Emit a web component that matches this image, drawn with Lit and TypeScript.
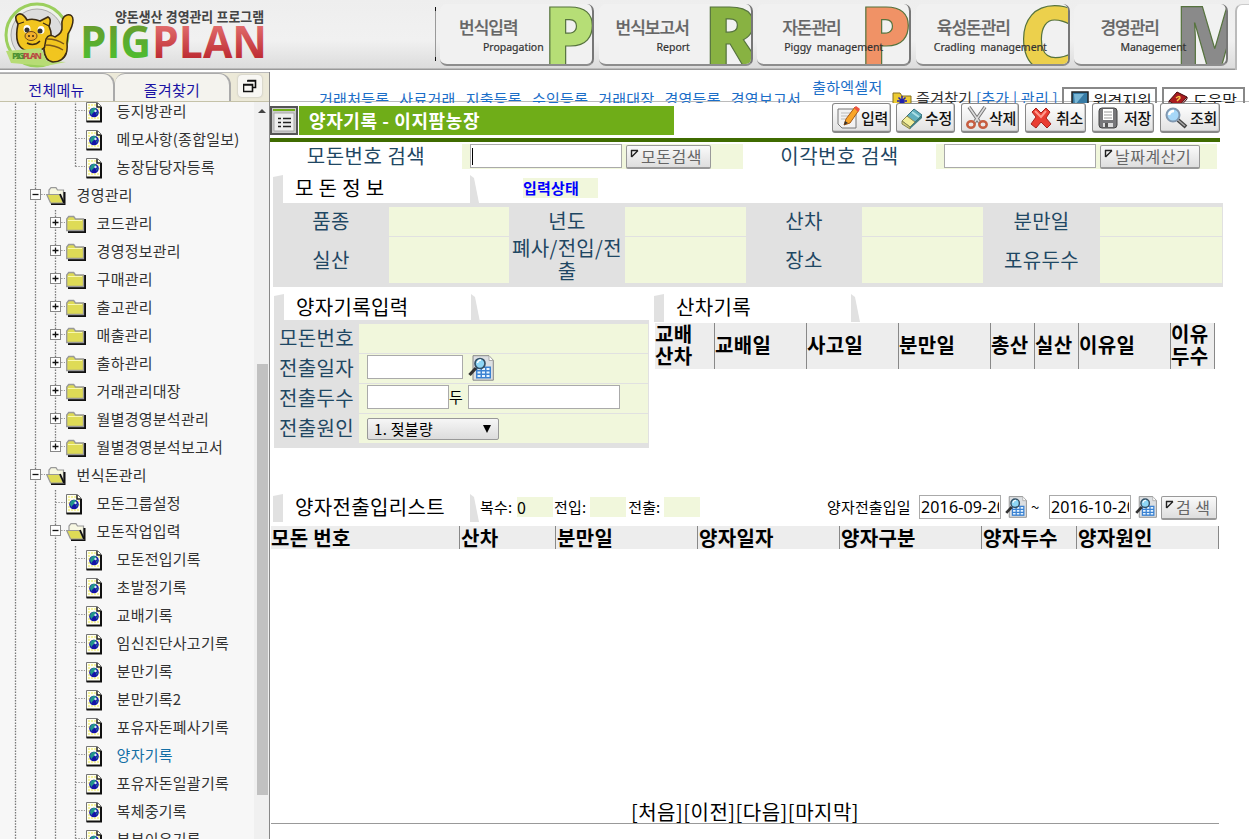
import { LitElement, html, css, svg, nothing } from "lit";
import { customElement } from "lit/decorators.js";
import { classMap } from "lit/directives/class-map.js";

type Kind = "doc" | "open" | "closed";
interface Node { t: string; k: Kind; g: string; on?: boolean }

// Guide codes: "|" full line, "." blank, "L" last branch, "T" branch, "-" / "+" expander, "e" expander that ends its branch
const tree: Node[] = [
  { t: "등지방관리", k: "doc", g: "||.T" },
  { t: "메모사항(종합일보)", k: "doc", g: "||.T" },
  { t: "농장담당자등록", k: "doc", g: "||.L" },
  { t: "경영관리", k: "open", g: "|-" },
  ...["코드관리", "경영정보관리", "구매관리", "출고관리", "매출관리", "출하관리", "거래관리대장", "월별경영분석관리"].map(
    (t) => ({ t, k: "closed" as Kind, g: "||+" })),
  { t: "월별경영분석보고서", k: "closed", g: "||e" },
  { t: "번식돈관리", k: "open", g: "|-" },
  { t: "모돈그룹설정", k: "doc", g: "||T" },
  { t: "모돈작업입력", k: "open", g: "||-" },
  ...["모돈전입기록", "초발정기록", "교배기록", "임신진단사고기록", "분만기록", "분만기록2", "포유자돈폐사기록", "양자기록", "포유자돈일괄기록", "복체중기록", "부분이유기록"].map(
    (t) => ({ t, k: "doc" as Kind, g: "|||T", on: t === "양자기록" })),
];

const docIcon = html`<svg width="17" height="21" viewBox="0 0 17 21">
  <path d="M.5.5h11l4 4v15H.5z" fill="#fffff0" stroke="#777"/>
  <path d="M2 3h8M2 6h3M12 7h2M2 9h2M13 11h1M2 13h2M2 16h11" stroke="#f2ee82" stroke-width="1.5" stroke-dasharray="2 1"/>
  <path d="M15 5v14.500M.5 19.500h15.500" stroke="#111" stroke-width="2"/><path d="M11 1v4h4" fill="none" stroke="#222" stroke-width="1.500"/>
  <circle cx="8" cy="10.500" r="4.800" fill="#1513a8"/><path d="M4 9q2-4 5-3t-1 4-1 4q-3-1-3-5zM10 12l2-3-1 4z" fill="#22968a"/><circle cx="9.500" cy="9" r="1.200" fill="#d8e8f8"/></svg>`;
const closedIcon = html`<svg width="20" height="18" viewBox="0 0 20 18">
  <path d="M2 17h17V4" fill="none" stroke="#111" stroke-width="2"/>
  <path d="M.7 15.500V4l2-2.500h5L9.500 4H17.500v11.500z" fill="#dedb56" stroke="#999" stroke-width="1.300"/><path d="M2 5.500h14" stroke="#f8f8b0"/></svg>`;
const openIcon = html`<svg width="21" height="18" viewBox="0 0 21 18">
  <path d="M3 9V3l2-2.300h5L11.500 3h6v12z" fill="#f7f7e2" stroke="#999" stroke-width="1.200"/>
  <path d="M18.500 5v12H5" fill="none" stroke="#111" stroke-width="2"/>
  <path d="M.7 7.500h12.800l4 8.500H4.500z" fill="#dedb56" stroke="#999" stroke-width="1.200"/><path d="M14 7l4 9" stroke="#111" stroke-width="1.800"/></svg>`;
const dateIcon = (w: number) => html`<svg width=${w} height=${w} viewBox="0 0 26 26">
  <path d="M5 .7h16l4.300 4.500v20H5z" fill="#dcdfe2" stroke="#888"/><path d="M21 1v4.500h4" fill="#fff" stroke="#aaa"/>
  <path d="M8 11.500h15v12H8z" fill="#3b82d2"/><path d="M9.500 13h3v2h-3zM14 13h3v2h-3zM18.500 13h3v2h-3zM9.500 16.500h3v2h-3zM14 16.500h3v2h-3zM18.500 16.500h3v2h-3zM9.500 20h3v2h-3zM14 20h3v2h-3zM18.500 20h3v2h-3z" fill="#e7f5ff"/>
  <path d="M8 13L1.500 20" stroke="#333" stroke-width="3.200"/><circle cx="12" cy="8.500" r="5" fill="#8fd7f6" stroke="#355267" stroke-width="1.700"/><path d="M9.500 8q.5-3 3.500-3" fill="none" stroke="#fff" stroke-width="1.300"/></svg>`;

const toolIcons = [
  svg`<path d="M2 3h18v19H6l-4-4z" fill="#f2f2f2" stroke="#777"/><path d="M5 7h10M5 10h8M5 13h5" stroke="#bbb"/><path d="M8 19l2-6 9-12 4 3-9 13z" fill="#f9a528" stroke="#a75b16"/><path d="M18 2l2-2 4 3-2 3z" fill="#ed5341"/><path d="M8 19l1-4 3 2z" fill="#333"/>`,
  svg`<path d="M2 15L14 3l8 6-12 12z" fill="#61aebd" stroke="#34727f"/><path d="M2 15l5-5 8 6-5 5z" fill="#f3ee9a" stroke="#888550"/><path d="M2 15v3l8 5v-2z" fill="#d5cf79" stroke="#888550"/><path d="M10 21l12-12v3L10 23z" fill="#427f85"/><path d="M12 6l7 5" stroke="#aee0e7" stroke-width="2"/>`,
  svg`<path d="M4 1l11 16M20 1L9 17" stroke="#777" stroke-width="3.500"/><path d="M4 1l11 16M20 1L9 17" stroke="#ddd" stroke-width="1.500"/><ellipse cx="6" cy="18.500" rx="3.700" ry="3.200" fill="none" stroke="#c65d40" stroke-width="2.500"/><ellipse cx="18" cy="18.500" rx="3.700" ry="3.200" fill="none" stroke="#c65d40" stroke-width="2.500"/>`,
  svg`<path d="M3 6l4-4 5 5 5-5 4 4-4 6 5 6-4 4-6-6-5 6-5-4 5-7z" fill="#e93d32" stroke="#a8221c"/><path d="M6 5l6 6 5-6" fill="none" stroke="#ff9a8d" stroke-width="2"/>`,
  svg`<rect x="3" y="2" width="18" height="20" rx="3" fill="#77777a" stroke="#444"/><path d="M7 3h10v11H7z" fill="#fff"/><path d="M8 6h8M8 9h8M8 12h8" stroke="#999"/><path d="M7 17h10v4H7z" fill="#ddd"/><path d="M9 17h3v4H9z" fill="#555"/>`,
  svg`<path d="M14 14l8 7" stroke="#444" stroke-width="4"/><path d="M14 14l7 6" stroke="#aaa" stroke-width="1.500"/><circle cx="9" cy="9" r="6.500" fill="#a6d7f8" stroke="#8098b0" stroke-width="2"/><path d="M5 9q1-4 5-4" fill="none" stroke="#fff" stroke-width="2.500"/>`,
];
const tools: [string, number, number][] = [["입력", 59, 5], ["수정", 59, 6], ["삭제", 58, 6], ["취소", 61, 6], ["저장", 62, 6], ["조회", 60, 0]];

@customElement("pig-header")
export class PigHeader extends LitElement {
  static styles = css`
    :host { display: flex; height: 72px; box-sizing: border-box; font-family: "Noto Sans", "Noto Sans CJK KR", sans-serif; background: linear-gradient(#eee 0, #f1f1f1 40px, #dcdcdc 68px, #999 69px, #999 70px, #fff 70px); }
    .logo { width: 435px; height: 69px; flex: none; }
    .rule { width: 1px; height: 54px; margin: 7px 4px 0 0; background: linear-gradient(#111 0 4px, #999 4px 50px, #111 50px); flex: none; }
    .card { position: relative; width: 154px; height: 62px; margin: 4px 4.600px 0 0; flex: none; overflow: hidden; box-sizing: border-box; border-radius: 7px; border-right: 2px solid #777; border-bottom: 2px solid #8d8d8d; background: #f1f1f1; }
    .letter { position: absolute; }
    .ko { position: absolute; top: 8px; font: 500 17px/30px "Noto Sans CJK KR", sans-serif; letter-spacing: -1px; color: #666; white-space: pre; -webkit-text-stroke: .2px #666; }
    .en { position: absolute; top: 34px; font-size: 10.500px; line-height: 18px; color: #333; white-space: pre; letter-spacing: -.020px; -webkit-text-stroke: .2px #333; }
    .end { flex: 1; box-sizing: border-box; margin: 4px 0 0 2px; background: #fff; border-left: 2px solid #bbb; border-top: 1px solid #ccc; border-radius: 7px 0 0 0; height: 66px; }
    .word { font-family: "Open Sans", Lato, sans-serif; }
  `;
  cards = [
    { ko: "번식입력", en: "Propagation", l: "P", c: "#b6de76", kx: 19, ex: 43, lx: 103.5, fs: 82, y: 61 },
    { ko: "번식보고서", en: "Report", l: "R", c: "#88b242", kx: 17, ex: 58, lx: 105, fs: 82, y: 61 },
    { ko: "자돈관리", en: "Piggy  management", l: "P", c: "#f09266", kx: 25, ex: 27, lx: 102.5, fs: 82, y: 61 },
    { ko: "육성돈관리", en: "Cradling  management", l: "C", c: "#ecd04c", kx: 21, ex: 18, lx: 103, fs: 90, y: 67 },
    { ko: "경영관리", en: "Management", l: "M", c: "#8a8a8a", kx: 26, ex: 46, lx: 101, fs: 82, y: 61 },
  ];
  render() {
    return html`
      <svg class="logo" viewBox="0 0 435 69">
        <defs>
          <linearGradient id="g" x1="0" y1="0" x2="0" y2="1"><stop offset=".2" stop-color="#699b2e"/><stop offset=".8" stop-color="#4dbd30"/></linearGradient>
          <linearGradient id="r" x1="0" y1="0" x2="0" y2="1"><stop offset=".2" stop-color="#e37070"/><stop offset=".8" stop-color="#bd2a31"/></linearGradient>
        </defs>
        <circle cx="37" cy="35" r="31" fill="#eef2e9" stroke="#9bcf5d" stroke-width="3"/>
        <circle cx="37" cy="35" r="26" fill="#ddd" stroke="#aaa"/>
        <path d="M18 24q-5-8 1-10 4-1 8 6 6-2 13 1l8-4q4 2 1 9 5 11-1 18-9 11-21 7-14-4-9-27z" fill="#f1c51f" stroke="#3c2c14" stroke-width="1.600"/>
        <path d="M18 24l6-2M49 26l-6-3" fill="none" stroke="#3c2c14" stroke-width="1.300"/>
        <ellipse cx="27" cy="29" rx="3.500" ry="4" fill="#fff"/><circle cx="27" cy="30" r="2.500" fill="#333"/>
        <ellipse cx="41" cy="30" rx="3.500" ry="4" fill="#fff"/><circle cx="40" cy="31" r="2.500" fill="#333"/>
        <ellipse cx="31" cy="36" rx="6" ry="4.500" fill="#f2b12b" stroke="#6e481c"/><path d="M29 35v2M33 35v2" stroke="#3c2c14" stroke-width="1.500"/><path d="M27 43q7 4 13-2" fill="none" stroke="#3c2c14" stroke-width="1.500"/>
        <path d="M55 37q8-4 7-11-1-9 5-11 6-1 6 5 0 6-5 14l-1 9q2 18-14 19-9-1-9-12l2-11q3-6 9-2z" fill="#f1c51f" stroke="#3c2c14" stroke-width="1.500"/>
        <path d="M47 39q10 0 17 5M45 45q10 0 18 5M45 52q8-1 15 4" fill="none" stroke="#7b571b" stroke-width="1.300"/>
        <path d="M6 51l35-3 6 13 19 1-20 4-35-3z" fill="#b7dc75"/>
        <path d="M44 48q1 13 9 14 10 0 13-9" fill="#f1c51f" stroke="#3c2c14" stroke-width="1.300"/>
        <text x="12" y="59" font-size="9" font-weight="800" textLength="30" fill="#4c8f32">PIG<tspan fill="#b94b43">PLAN</tspan></text>
        <text x="115" y="21.500" font-size="14" font-weight="600" textLength="149" lengthAdjust="spacingAndGlyphs" fill="#444">양돈생산 경영관리 프로그램</text>
        <text class="word" x="80" y="58" font-size="44" font-weight="700" textLength="71" lengthAdjust="spacingAndGlyphs" fill="url(#g)">PIG</text>
        <text class="word" x="152" y="58" font-size="44" font-weight="700" textLength="115" lengthAdjust="spacingAndGlyphs" fill="url(#r)">PLAN</text>
      </svg>
      <div class="rule"></div>
      ${this.cards.map((c) => html`<div class="card">
        <svg class="letter" width="154" height="62"><text x=${c.lx} y=${c.y} font-size=${c.fs} font-family="Open Sans" font-weight="800" fill=${c.c} stroke="#56733e" stroke-width="1.200">${c.l}</text></svg>
        <span class="ko" style="left:${c.kx}px">${c.ko}</span><span class="en" style="left:${c.ex}px">${c.en}</span></div>`)}
      <div class="end"></div>`;
  }
}

@customElement("side-tree")
export class SideTree extends LitElement {
  static styles = css`
    :host { display: flex; flex-direction: column; width: 269px; height: 767px; border-right: 1px solid #888; background: #f7f7f7; font: 15px "Noto Sans CJK KR", sans-serif; box-sizing: content-box; overflow: hidden; }
    .tabs { display: flex; height: 30px; flex: none; background: #ece9d8; border-top: 1px solid #bbb; border-bottom: 1px solid #c5c2a9; box-sizing: border-box; }
    .tab { width: 115px; box-sizing: border-box; border-right: 2px solid #aaa; border-top: 1px solid #aaa; border-radius: 0 12px 0 0; background: #f4f3ee; color: #1a12a4; text-align: center; line-height: 31px; letter-spacing: .3px; }
    .tab.two { border-radius: 10px 12px 0 0; width: 116px; }
    .win { margin: 2px 0 0 7px; width: 24px; height: 22px; border-radius: 4px; background: #f8f7f3; display: grid; place-items: center; box-shadow: 0 0 2px #aaa; }
    .body { display: flex; flex: 1; overflow: hidden; }
    .rows { flex: 1; padding-left: 5px; margin-top: -4px; }
    .row { display: flex; height: 28px; color: #333; }
    .row.on { color: #146fa5; }
    .t { line-height: 26px; letter-spacing: .25px; white-space: nowrap; padding-left: .600px; }
    .ic { width: 31px; height: 28px; padding: 4px 0 0 1px; box-sizing: border-box; flex: none; }
    .ic.f { padding-top: 5px; }
    .g { width: 20px; height: 28px; flex: none; }
    .bar { width: 15px; background: #f0f0f0; display: flex; flex-direction: column; align-items: center; }
    .up { margin-top: 7px; border: 4px solid transparent; border-top: 0; border-bottom: 4px solid #444; }
    .thumb { margin: 251px 0 0 1px; width: 11px; height: 431px; background: #c1c1c1; }
  `;
  guide(ch: string) {
    const d = "1.500 1.300";
    const v = ch === "." ? nothing : svg`<path d=${ch === "L" || ch === "e" ? "M10.500 0V13" : "M10.500 0V28"} stroke="#777" stroke-width="1.300" stroke-dasharray=${d}/>`;
    const h = "LT-+e".includes(ch) ? svg`<path d="M10.500 12.500H20" stroke="#999" stroke-dasharray=${d}/>` : nothing;
    const box = "-+e".includes(ch)
      ? svg`<rect x="5.500" y="7.500" width="10" height="10" fill="#fff" stroke="#888"/><path d=${ch === "-" ? "M7.500 12.500h6" : "M7.500 12.500h6M10.500 9.500v6"} stroke="#111" stroke-width="1.300"/>`
      : nothing;
    return html`<svg class="g">${v}${h}${box}</svg>`;
  }
  render() {
    return html`<div class="tabs"><div class="tab">전체메뉴</div><div class="tab two">즐겨찾기</div>
        <div class="win"><svg width="14" height="14"><path d="M4.500 1.500h8v7H9.500M4 2h9M.500 5.500h9v7h-9zM0 6h10" fill="none" stroke="#111" stroke-width="1.600"/></svg></div></div>
      <div class="body"><div class="rows">${tree.map((n) => html`<div class=${classMap({ row: true, on: !!n.on })}>
        ${[...n.g].map((c) => this.guide(c))}<span class=${classMap({ ic: true, f: n.k !== "doc" })}>${n.k === "doc" ? docIcon : n.k === "open" ? openIcon : closedIcon}</span><span class="t">${n.t}</span></div>`)}</div>
        <div class="bar"><span class="up"></span><span class="thumb"></span></div></div>`;
  }
}

@customElement("app-root")
export class AppRoot extends LitElement {
  static styles = css`
    :host { display: block; width: 1249px; height: 839px; overflow: hidden; background: #fff; font-family: "Noto Sans CJK KR", sans-serif; color: #000; }
    .cols { display: flex; }
    .main { width: 979px; flex: none; }
    .links { display: flex; height: 31px; overflow: hidden; font-size: 15px; color: #1b6ec8; background: linear-gradient(#fff 29px, #bbb 29px, #bbb 30px, #fff 30px); padding-left: 49px; box-sizing: border-box; white-space: nowrap; }
    .links a { line-height: 22px; margin: 16px 10px 0 0; height: 22px; letter-spacing: .27px; flex: none; }
    .links a.hi { margin: 4px 10px 0 1px; }
    .links .fav { margin: 15px 4px 0 0; letter-spacing: .250px; color: #333; }
    .links .fav b { font-weight: 400; color: #1b6ec8; }
    .fold { margin-top: 19px; flex: none; }
    .tb { display: flex; box-sizing: border-box; flex: none; width: 95px; height: 30px; margin: 15px 5px 0 0; border: 2px solid #888; gap: 4px; padding: 2px 0 0 7px; color: #222; font-weight: 400; font-size: 16px; line-height: 18px; }
    .tb.b { width: 83px; margin-right: 0; padding-left: 4px; }
    .title { display: flex; height: 35px; border-bottom: 4px solid #3f6b00; width: 950px; box-sizing: content-box; }
    .mi { width: 28px; height: 29px; margin-top: 3px; flex: none; }
    .green { width: 375px; height: 29px; margin: 3px 0 0 1px; background: #6fad18; color: #fff; font-weight: 700; font-size: 18px; line-height: 29px; letter-spacing: .6px; padding-left: 10px; box-sizing: border-box; margin-right: 158px; white-space: nowrap; }
    .tool { height: 30px; flex: none; box-sizing: border-box; border: 1px solid #888; border-bottom-width: 2px; border-radius: 3px; background: linear-gradient(#fff, #e2e2e2); display: flex; align-items: center; justify-content: space-between; padding: 0 2px 0 3px; font-size: 15px; line-height: 24px; font-weight: 500; letter-spacing: -.300px; color: #111; box-shadow: inset -1px -1px #ccc; white-space: nowrap; }
    .tool svg { flex: none; }
    .lab { color: #1f4763; font-size: 20px; letter-spacing: .3px; line-height: 24px; }
    .search { display: flex; height: 25px; margin-top: 2px; }
    .search .lab { width: 192px; text-align: center; letter-spacing: .5px; }
    .search .l2 { width: 193px; }
    .pale { background: #f1f7dc; }
    .sp { display: flex; box-sizing: border-box; padding-left: 8px; width: 281px; gap: 4px; }
    .box { box-sizing: border-box; height: 24px; border: 1px solid #aaa; background: #fff; flex: none; overflow: hidden; white-space: nowrap; font: 16px/22px "Noto Sans", sans-serif; padding: 0 1px; letter-spacing: .15px; }
    .w152 { width: 152px; } .w96 { width: 96px; } .w82 { width: 82px; }
    .clip { display: block; overflow: hidden; }
    .caret { display: block; width: 1px; height: 17px; background: #000; margin-top: 3px; }
    .btn { height: 24px; margin-top: 1px; box-sizing: border-box; border: 1px solid #999; border-bottom: 2px solid #999; border-radius: 2px; background: linear-gradient(#fafafa, #dedede); color: #666; font-size: 16px; line-height: 20px; letter-spacing: .5px; display: flex; gap: 2px; padding-left: 3px; flex: none; white-space: nowrap; }
    .btn svg { margin-top: 3px; flex: none; }
    .tabrow { display: flex; align-items: flex-start; height: 28px; }
    .first { padding: 6px 0 0 3px; }
    .tabrow .name { width: 187px; box-sizing: border-box; padding-left: 12px; font-size: 20px; line-height: 26px; letter-spacing: .35px; white-space: pre; }
    .state { margin: 3px 0 0 44px; width: 75px; height: 20px; box-sizing: border-box; color: #00f; font-size: 15px; font-weight: 700; line-height: 19px; letter-spacing: .2px; }
    .info { display: grid; grid-template-columns: 116px 120px 116px 121px 116px 121px 117px 122px; grid-template-rows: 29px 46px; row-gap: 1px; width: 950px; box-sizing: border-box; height: 84px; margin-left: 3px; background: #e1e1e1; padding: 4px 0; }
    .info .lab { display: flex; align-items: center; justify-content: center; text-align: center; line-height: 23px; word-break: break-all; padding-bottom: 2px; }
    .mid { display: flex; gap: 5px; padding: 7px 0 0 4px; height: 200px; box-sizing: border-box; }
    .form { width: 375px; box-sizing: border-box; height: 128px; margin-top: -1px; background: #e1e1e1; padding: 4px 1px 4px 0; display: grid; grid-template-columns: 85px 289px; grid-auto-rows: 29px; row-gap: 1px; }
    .form .lab { text-align: center; line-height: 27px; }
    .form .pale { display: flex; align-items: flex-start; padding: 1px 0 0 8px; }
    .mid .tabrow { height: 27px; }
    .du { font-size: 15px; line-height: 24px; width: 19px; }
    .sel { width: 132px; height: 22px; margin-top: 3px; border: 1px solid #999; border-radius: 2px; background: linear-gradient(#f6f6f6, #dcdcdc); box-sizing: border-box; display: flex; justify-content: space-between; font-size: 15px; line-height: 20px; padding: 0 7px 0 6px; letter-spacing: .3px; }
    .arr { border: 4px solid transparent; border-top: 8px solid #000; border-bottom: 0; height: 0; margin-top: 6px; }
    .r { width: 570px; }
    .th { display: flex; background: #ededed; font-size: 20px; font-weight: 700; white-space: nowrap; }
    .th span { box-sizing: border-box; border-right: 1px solid #888; flex: none; display: flex; align-items: center; line-height: 23px; white-space: pre; }
    .lit { height: 46px; width: 560px; margin: 2px 0 0 1px; }
    .lit span { padding: 0 0 3px 0; font-size: 20px; letter-spacing: .3px; line-height: 22px; }
    .list { display: flex; padding: 0 0 0 3px; height: 32px; margin-top: 7px; font-size: 15px; }
    .list .tx { line-height: 26px; white-space: nowrap; flex: none; letter-spacing: .15px; }
    .q { height: 20px; margin-top: 3px; width: 36px; flex: none; line-height: 20px; font-size: 16px; }
    .lt { height: 23px; width: 948px; margin-left: 1px; }
    .lt span { line-height: 23px; padding-left: 1px; letter-spacing: .3px; }
    .lt span:first-child { padding-left: 0; }
    .pages { height: 275px; border-bottom: 1px solid #999; width: 948px; margin-left: 1px; display: flex; align-items: flex-end; justify-content: center; font-size: 20px; line-height: 22px; letter-spacing: .5px; box-sizing: border-box; }
    .i { display: block; flex: none; }
    .push1 { margin-left: 5px; } .push2 { margin-left: 4px; margin-top: 2px; }
  `;
  mark = html`<svg width="9" height="10"><path d="M1 1.500h7M1.500 1v7M1.500 8L8 1.500" fill="none" stroke="#222" stroke-width="1.400"/></svg>`;
  tab(name: string, extra: unknown = nothing) {
    return html`<div class="tabrow"><svg class="i" width="10" height="28"><path d="M0 2L10 0V28H0z" fill="#e1e1e1"/></svg>
      <span class="name">${name}</span><svg class="i" width="9" height="28"><path d="M0 0L4 3 9 28H0z" fill="#e1e1e1"/></svg>${extra}</div>`;
  }
  render() {
    const lit: [string, number][] = [["교배\n산차", 60], ["교배일", 92], ["사고일", 92], ["분만일", 92], ["총산", 44], ["실산", 44], ["이유일", 92], ["이유\n두수", 44]];
    const cols: [string, number][] = [["모돈 번호", 189], ["산차", 96], ["분만일", 142], ["양자일자", 142], ["양자구분", 142], ["양자두수", 95], ["양자원인", 142]];
    return html`<pig-header></pig-header><div class="cols"><side-tree></side-tree><div class="main">
      <div class="links">${["거래처등록", "사료거래", "지출등록", "수익등록", "거래대장", "경영등록", "경영보고서"].map((t) => html`<a>${t}</a>`)}<a class="hi">출하엑셀저</a>
        <svg class="fold" width="20" height="17"><path d="M1 16V2h7l2 3h9v11z" fill="#eccb33" stroke="#846e20"/><path d="M10 5v10M5 10h10M6.500 6.500l7 7M13.500 6.500l-7 7" stroke="#2020b0" stroke-width="1.500"/></svg>
        <a class="fav">&nbsp;즐겨찾기 <b>[추가 | 관리 ]</b></a>
        <span class="tb"><svg class="i" width="18" height="17"><path d="M1 1h16v15H1z" fill="#377ba5" stroke="#222" stroke-width="1.500"/><path d="M3 3h10L4 14z" fill="#79b6d5"/></svg>원격지원</span>
        <span class="tb b"><svg class="i" width="21" height="18"><path d="M1 10L9 1l10 5-9 11z" fill="#a71b20" stroke="#46090c"/><path d="M1 10v4l9 4 9-10V6l-9 10z" fill="#eee" stroke="#46090c"/><path d="M8 7q4-3 4 0l-3 3" stroke="#f7c948" stroke-width="1.500" fill="none"/></svg>도움말</span></div>
      <div class="title"><svg class="mi" viewBox="0 0 28 29"><path d="M1 1h26v27H1z" fill="#c9c9c9" stroke="#555" stroke-width="2"/><path d="M3 3h22v2H3z" fill="#6fad18"/><path d="M4 7h20v18H4z" fill="#eee" stroke="#aaa"/><path d="M8 12.500h3M13 12.500h8M8 16.500h3M13 16.500h8M8 20.500h3M13 20.500h8" stroke="#222" stroke-width="1.600"/></svg>
        <div class="green">양자기록 - 이지팜농장</div>
        ${tools.map(([t, w, m], i) => html`<div class="tool" style="width:${w}px;margin-right:${m}px"><svg width="24" height="24" viewBox="0 0 24 24">${toolIcons[i]}</svg>${t}</div>`)}</div>
      <div class="search"><span class="lab">모돈번호 검색</span><div class="pale sp"><span class="box w152"><i class="caret"></i></span><span class="btn" style="width:85px">${this.mark}모돈검색</span></div>
        <span class="lab l2">이각번호 검색</span><div class="pale sp"><span class="box w152"></span><span class="btn" style="width:100px">${this.mark}날짜계산기</span></div></div>
      <div class="first">${this.tab("모 돈 정 보", html`<span class="pale state">입력상태</span>`)}</div>
      <div class="info">${["품종", "년도", "산차", "분만일", "실산", "폐사/전입/전출", "장소", "포유두수"].map((t) => html`<span class="lab">${t}</span><span class="pale"></span>`)}</div>
      <div class="mid"><div>${this.tab("양자기록입력")}<div class="form">
        <span class="lab">모돈번호</span><div class="pale"></div>
        <span class="lab">전출일자</span><div class="pale"><span class="box w96"></span><span class="i push1">${dateIcon(26)}</span></div>
        <span class="lab">전출두수</span><div class="pale"><span class="box w82"></span><span class="du">두</span><span class="box w152"></span></div>
        <span class="lab">전출원인</span><div class="pale"><span class="sel">1. 젖불량<i class="arr"></i></span></div></div></div>
        <div class="r">${this.tab("산차기록")}<div class="th lit">${lit.map(([t, w]) => html`<span style="width:${w}px">${t}</span>`)}</div></div></div>
      <div class="list">${this.tab("양자전출입리스트")}<span class="tx" style="width:38px">&hairsp;복수:</span><span class="q pale">0</span><span class="tx" style="width:37px">&hairsp;전입:</span><span class="q pale"></span><span class="tx" style="width:38px">&hairsp;&hairsp;전출:</span><span class="q pale"></span>
        <span class="tx" style="margin-left:127px;width:92px">양자전출입일</span><span class="box w82" style="margin-top:1px"><i class="clip" style="font-style:normal">2016-09-20</i></span><span class="i push2">${dateIcon(22)}</span>
        <span class="tx" style="width:22px;padding-left:4px;box-sizing:border-box">~</span><span class="box w82" style="margin-top:1px"><i class="clip" style="font-style:normal">2016-10-20</i></span><span class="i push2">${dateIcon(22)}</span><span class="btn" style="width:56px;margin:2px 0 0 4px">${this.mark}검 색</span></div>
      <div class="th lt">${cols.map(([t, w]) => html`<span style="width:${w}px">${t}</span>`)}</div>
      <div class="pages">[처음][이전][다음][마지막]</div></div></div>`;
  }
}
